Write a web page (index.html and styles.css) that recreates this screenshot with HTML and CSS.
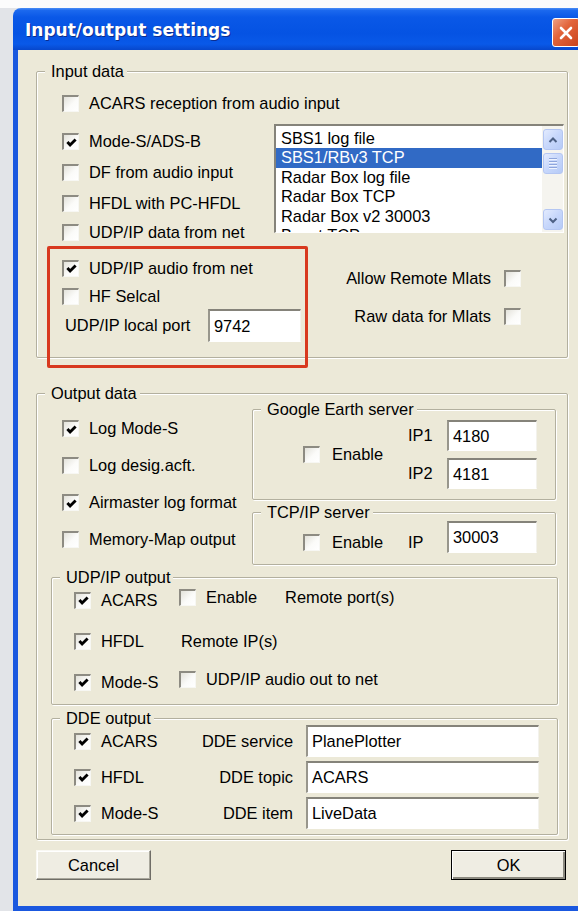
FILE: index.html
```html
<!DOCTYPE html>
<html lang="en">
<head>
<meta charset="utf-8">
<title>Input/output settings</title>
<link rel="stylesheet" href="styles.css">
</head>
<body>
<div class="window">
  <header class="titlebar">
    <span class="title">Input/output settings</span>
    <span class="close" aria-label="Close">
      <svg viewBox="0 0 20 20" width="20" height="20"><path d="M5 5 L15 15 M15 5 L5 15" stroke="#fff" stroke-width="2.6" stroke-linecap="round"/></svg>
    </span>
  </header>

  <main class="client">
    <!-- Input data -->
    <section class="group group-input">
      <h2 class="group-title">Input data</h2>
      <div class="check row-acars"><span class="box"></span>ACARS reception from audio input</div>

      <div class="input-mid">
        <div class="input-sources">
          <div class="check src-row"><span class="box on"><svg viewBox="0 0 13 13"><path d="M2.4 6 L5.1 9 L10.6 3.4"/></svg></span>Mode-S/ADS-B</div>
          <div class="check src-row"><span class="box"></span>DF from audio input</div>
          <div class="check src-row"><span class="box"></span>HFDL with PC-HFDL</div>
          <div class="check src-row short"><span class="box"></span>UDP/IP data from net</div>
        </div>
        <div class="listbox">
          <ul class="list-items">
            <li>SBS1 log file</li>
            <li class="selected">SBS1/RBv3 TCP</li>
            <li>Radar Box log file</li>
            <li>Radar Box TCP</li>
            <li>Radar Box v2 30003</li>
            <li>Beast TCP</li>
          </ul>
          <div class="scrollbar">
            <span class="sb-btn"><svg viewBox="0 0 12 12"><path d="M2.5 8 L6 4.5 L9.5 8"/></svg></span>
            <span class="sb-thumb"><i></i><i></i><i></i><i></i></span>
            <span class="sb-btn sb-down"><svg viewBox="0 0 12 12"><path d="M2.5 4.5 L6 8 L9.5 4.5"/></svg></span>
          </div>
        </div>
      </div>

      <div class="input-low">
        <div class="highlight">
          <div class="check hl-row"><span class="box on"><svg viewBox="0 0 13 13"><path d="M2.4 6 L5.1 9 L10.6 3.4"/></svg></span>UDP/IP audio from net</div>
          <div class="check hl-row selcal"><span class="box"></span>HF Selcal</div>
          <div class="port-row">
            <span class="port-label">UDP/IP local port</span>
            <span class="field port-field">9742</span>
          </div>
        </div>
        <div class="mlat">
          <div class="check check-right"><span>Allow Remote Mlats</span><span class="box"></span></div>
          <div class="check check-right"><span>Raw data for Mlats</span><span class="box"></span></div>
        </div>
      </div>
    </section>

    <!-- Output data -->
    <section class="group group-output">
      <h2 class="group-title">Output data</h2>
      <div class="out-top">
        <div class="out-logs">
          <div class="check log-row"><span class="box on"><svg viewBox="0 0 13 13"><path d="M2.4 6 L5.1 9 L10.6 3.4"/></svg></span>Log Mode-S</div>
          <div class="check log-row"><span class="box"></span>Log desig.acft.</div>
          <div class="check log-row"><span class="box on"><svg viewBox="0 0 13 13"><path d="M2.4 6 L5.1 9 L10.6 3.4"/></svg></span>Airmaster log format</div>
          <div class="check log-row"><span class="box"></span>Memory-Map output</div>
        </div>
        <div class="servers">
          <section class="group group-ge">
            <h2 class="group-title">Google Earth server</h2>
            <div class="check srv-enable"><span class="box"></span>Enable</div>
            <div class="ge-fields">
              <span class="ip-label">IP1</span><span class="field srv-field">4180</span>
              <span class="ip-label">IP2</span><span class="field srv-field">4181</span>
            </div>
          </section>
          <section class="group group-tcp">
            <h2 class="group-title">TCP/IP server</h2>
            <div class="check srv-enable nudge"><span class="box"></span>Enable</div>
            <span class="ip-label tcp-ip nudge">IP</span>
            <span class="field srv-field tcp-field">30003</span>
          </section>
        </div>
      </div>

      <section class="group group-udp">
        <h2 class="group-title">UDP/IP output</h2>
        <div class="check"><span class="box on"><svg viewBox="0 0 13 13"><path d="M2.4 6 L5.1 9 L10.6 3.4"/></svg></span>ACARS</div>
        <div class="udp-col">
          <div class="check raise"><span class="box"></span>Enable</div>
          <span class="remote-port raise">Remote port(s)</span>
        </div>
        <div class="check"><span class="box on"><svg viewBox="0 0 13 13"><path d="M2.4 6 L5.1 9 L10.6 3.4"/></svg></span>HFDL</div>
        <div class="udp-col remote-ip">Remote IP(s)</div>
        <div class="check"><span class="box on"><svg viewBox="0 0 13 13"><path d="M2.4 6 L5.1 9 L10.6 3.4"/></svg></span>Mode-S</div>
        <div class="udp-col">
          <div class="check raise"><span class="box"></span>UDP/IP audio out to net</div>
        </div>
      </section>

      <section class="group group-dde">
        <h2 class="group-title">DDE output</h2>
        <div class="check"><span class="box on"><svg viewBox="0 0 13 13"><path d="M2.4 6 L5.1 9 L10.6 3.4"/></svg></span>ACARS</div>
        <span class="dde-label">DDE service</span>
        <span class="field dde-field">PlanePlotter</span>
        <div class="check"><span class="box on"><svg viewBox="0 0 13 13"><path d="M2.4 6 L5.1 9 L10.6 3.4"/></svg></span>HFDL</div>
        <span class="dde-label">DDE topic</span>
        <span class="field dde-field">ACARS</span>
        <div class="check"><span class="box on"><svg viewBox="0 0 13 13"><path d="M2.4 6 L5.1 9 L10.6 3.4"/></svg></span>Mode-S</div>
        <span class="dde-label">DDE item</span>
        <span class="field dde-field">LiveData</span>
      </section>
    </section>

    <div class="buttons">
      <button class="btn" type="button">Cancel</button>
      <button class="btn btn-default" type="button">OK</button>
    </div>
  </main>
</div>
</body>
</html>
```

FILE: styles.css
```css
* { box-sizing: border-box; }

html, body {
  margin: 0;
  overflow: hidden;
}

body {
  width: 578px;
  height: 911px;
  padding: 8px 0 0 13px;
  background: linear-gradient(#fcfcfc 0 8px, #e2e4e8 8px);
  font-family: "Liberation Sans", Arial, sans-serif;
  font-size: 16.4px;
  color: #000;
}

/* ---------- window frame ---------- */
.window {
  width: 580px;
  height: 903px;
  display: flex;
  flex-direction: column;
  border-radius: 8px 8px 0 0;
  overflow: hidden;
}

.titlebar {
  flex: none;
  height: 42px;
  display: flex;
  align-items: flex-start;
  padding-left: 12px;
  background: linear-gradient(#4a8df5 0, #1b68ee 6%, #0a58e7 22%, #0553e3 60%, #0959e8 86%, #0747cc 100%);
}

.title {
  margin-top: 12px;
  font-family: "DejaVu Sans", sans-serif;
  font-weight: bold;
  font-size: 17px;
  line-height: 20px;
  color: #fff;
  text-shadow: 1px 1px 0 #0c2d8e;
}

.close {
  margin: 10px 13px 0 auto;
  width: 28px;
  height: 29px;
  display: flex;
  align-items: center;
  justify-content: center;
  border: 1px solid #fff;
  border-radius: 3px;
  background: linear-gradient(135deg, #f0a083 0%, #e2643b 40%, #c9441c 100%);
}

.client {
  flex: 1;
  display: flex;
  flex-direction: column;
  padding: 21px 0 0 18px;
  background: #ece9d8;
  border-left: 5px solid #1a58df;
  border-bottom: 5px solid #1a58df;
}

/* ---------- group boxes ---------- */
.group {
  position: relative;
  border: 1px solid #b3b09f;
  border-radius: 2px;
  box-shadow: inset 1px 1px 0 #fff, 1px 1px 0 #fff;
}

.group-title {
  position: absolute;
  top: -10px;
  left: 8px;
  margin: 0;
  padding: 0 3px 0 6px;
  background: #ece9d8;
  font-size: 16.4px;
  font-weight: normal;
  line-height: 18px;
  white-space: nowrap;
}

/* ---------- check boxes ---------- */
.check {
  display: flex;
  align-items: center;
  gap: 10px;
  white-space: nowrap;
}

.box {
  flex: none;
  width: 17px;
  height: 17px;
  display: flex;
  align-items: center;
  justify-content: center;
  border-top: 2px solid #8d8b82;
  border-left: 2px solid #8d8b82;
  border-right: 1px solid #f7f7f3;
  border-bottom: 1px solid #f7f7f3;
  background: linear-gradient(135deg, #e3e2da 0%, #fbfbf9 55%, #fff 100%);
}

.box svg {
  width: 13px;
  height: 13px;
}

.box svg path {
  fill: none;
  stroke: #000;
  stroke-width: 2.9;
}

/* ---------- edit fields ---------- */
.field {
  display: flex;
  align-items: center;
  padding-left: 4px;
  background: #fff;
  border-top: 2px solid #85837a;
  border-left: 2px solid #98968c;
  border-right: 1px solid #f3f2ec;
  border-bottom: 1px solid #fff;
  white-space: nowrap;
}

/* ---------- input data ---------- */
.group-input {
  width: 532px;
  padding: 0 2px 0 25px;
}

.row-acars {
  margin-top: 16px;
  height: 30px;
}

.input-mid {
  display: flex;
  height: 128px;
}

.input-sources {
  width: 212px;
  padding-top: 8px;
}

.src-row { height: 31px; }
.src-row.short { height: 27px; }

.listbox {
  margin-top: 6px;
  width: 290px;
  height: 109px;
  display: flex;
  background: #fff;
  border-top: 2px solid #85837a;
  border-left: 2px solid #85837a;
  border-right: 1px solid #fff;
  border-bottom: 1px solid #fff;
  overflow: hidden;
}

.list-items {
  flex: 1;
  margin: 0;
  padding: 2.5px 0 0;
  list-style: none;
}

.list-items li {
  height: 19.5px;
  line-height: 19.5px;
  padding-left: 5px;
  white-space: nowrap;
}

.list-items .selected {
  background: #316ac5;
  color: #fff;
}

.scrollbar {
  flex: none;
  width: 21px;
  display: flex;
  flex-direction: column;
  padding: 3px 0 2px 1px;
  background: #f5f4ef;
}

.sb-btn,
.sb-thumb {
  flex: none;
  height: 21px;
  border: 1px solid #b4c6f2;
  border-radius: 3px;
  background: linear-gradient(135deg, #e3ebfe 0%, #c7d7fb 50%, #b6cbf7 100%);
}

.sb-btn {
  display: flex;
  align-items: center;
  justify-content: center;
}

.sb-btn svg {
  width: 12px;
  height: 12px;
}

.sb-btn svg path {
  fill: none;
  stroke: #4d6185;
  stroke-width: 2;
}

.sb-thumb {
  margin-top: 3px;
  display: flex;
  flex-direction: column;
  justify-content: center;
  align-items: center;
  gap: 1px;
}

.sb-thumb i {
  display: block;
  width: 8px;
  height: 1px;
  background: #8fa6dc;
  border-bottom: 1px solid #eef3fe;
  box-sizing: content-box;
}

.sb-down { margin-top: auto; }

.input-low {
  display: flex;
  height: 111px;
}

.highlight {
  flex: none;
  margin-left: -15px;
  width: 261px;
  height: 122px;
  padding: 4px 0 0 12px;
  border: 3px solid #d8391f;
  border-radius: 2px;
}

.hl-row { height: 30px; }
.hl-row.selcal { height: 26px; }

.port-row {
  display: flex;
  align-items: center;
  height: 33px;
  padding-left: 3px;
}

.port-label { width: 143px; }

.port-field {
  width: 93px;
  height: 33px;
}

.mlat {
  margin: 0 44px 0 auto;
  padding-top: 17px;
  display: flex;
  flex-direction: column;
  align-items: flex-end;
  gap: 8px;
}

.check-right {
  height: 30px;
  gap: 13px;
}

/* ---------- output data ---------- */
.group-output {
  width: 532px;
  margin-top: 35px;
  padding-bottom: 4px;
}

.out-top { display: flex; }

.out-logs {
  width: 215px;
  padding: 16px 0 0 25px;
}

.log-row { height: 37px; }

.servers {
  padding-top: 15px;
  width: 304px;
}

.group-ge,
.group-tcp {
  display: flex;
  align-items: center;
  padding-left: 50px;
}

.group-ge { height: 91px; }

.group-tcp {
  margin-top: 12px;
  height: 53px;
}

.srv-enable {
  width: 105px;
  gap: 12px;
}

.nudge { margin-top: 7px; }

.ge-fields {
  display: grid;
  grid-template-columns: 39px 90px;
  grid-template-rows: 31px 31px;
  row-gap: 7px;
  align-items: center;
}

.tcp-ip { width: 39px; }

.srv-field { width: 90px; height: 31px; }
.tcp-field { height: 32px; margin-top: -4px; }

.group-udp {
  margin: 12px 0 0 14px;
  width: 507px;
  height: 128px;
  display: grid;
  grid-template-columns: 105px auto;
  grid-template-rows: repeat(3, 36px);
  row-gap: 5px;
  align-items: center;
  padding: 4px 0 0 22px;
}

.udp-col {
  display: flex;
  align-items: center;
}

.raise { margin-top: -5px; }

.remote-port { margin-left: 28px; }

.remote-ip { padding-left: 2px; }

.group-dde {
  margin: 13px 0 0 14px;
  width: 507px;
  height: 117px;
  display: grid;
  grid-template-columns: 105px 127px 233px;
  grid-auto-rows: 32px;
  row-gap: 4px;
  align-items: center;
  padding: 6px 0 0 22px;
}

.dde-label {
  text-align: right;
  padding-right: 13px;
}

.dde-field { height: 32px; }

/* ---------- dialog buttons ---------- */
.buttons {
  display: flex;
  justify-content: space-between;
  width: 530px;
  margin-top: 10px;
}

.btn {
  width: 115px;
  height: 30px;
  padding: 0;
  font-family: "Liberation Sans", Arial, sans-serif;
  font-size: 16.4px;
  color: #000;
  background: #efede3;
  border: 1px solid #f9f8f3;
  border-right-color: #6f6d66;
  border-bottom-color: #6f6d66;
  box-shadow: inset -1px -1px 0 #a9a79c, inset 1px 1px 0 #fff;
}

.btn-default {
  border: 1px solid #000;
  box-shadow: inset 1px 1px 0 #fff, inset -2px -2px 0 #8b897f;
}
```
